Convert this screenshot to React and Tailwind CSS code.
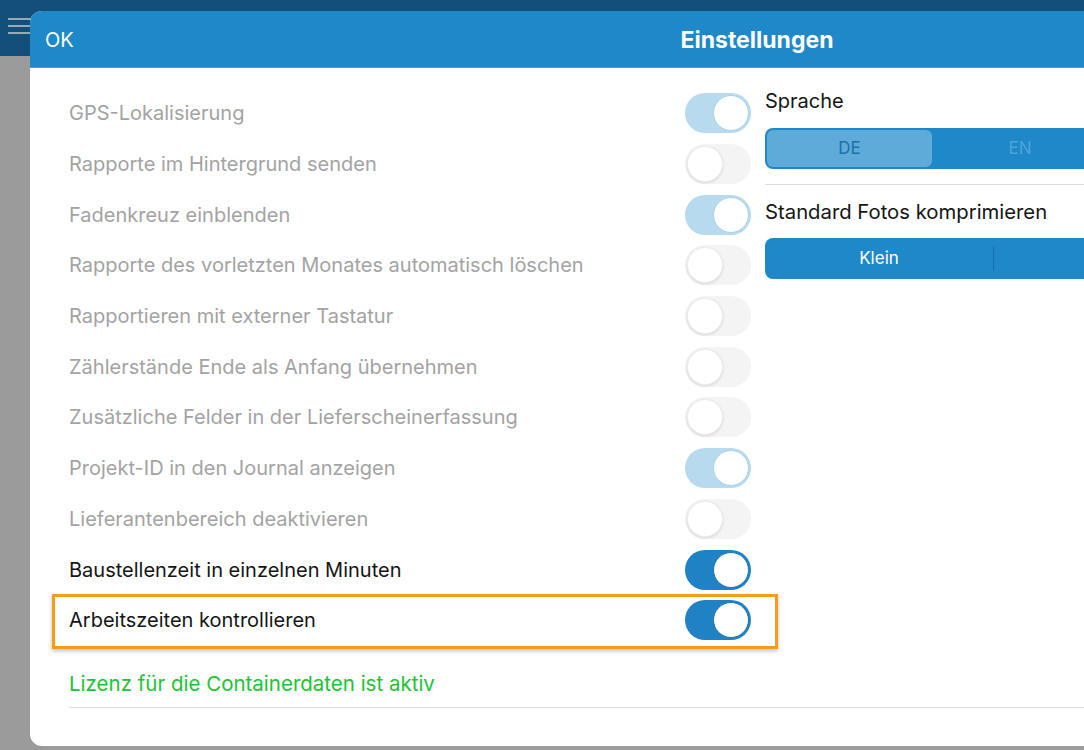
import React from "react";

const rows = [
  { label: "GPS-Lokalisierung", on: true, active: false },
  { label: "Rapporte im Hintergrund senden", on: false, active: false },
  { label: "Fadenkreuz einblenden", on: true, active: false },
  { label: "Rapporte des vorletzten Monates automatisch löschen", on: false, active: false },
  { label: "Rapportieren mit externer Tastatur", on: false, active: false },
  { label: "Zählerstände Ende als Anfang übernehmen", on: false, active: false },
  { label: "Zusätzliche Felder in der Lieferscheinerfassung", on: false, active: false },
  { label: "Projekt-ID in den Journal anzeigen", on: true, active: false },
  { label: "Lieferantenbereich deaktivieren", on: false, active: false },
  { label: "Baustellenzeit in einzelnen Minuten", on: true, active: true },
  { label: "Arbeitszeiten kontrollieren", on: true, active: true, highlight: true },
];

function Toggle({ on, active }) {
  if (on && active) {
    return (
      <div className="w-[66px] h-[40px] rounded-full bg-[#1e82c4] flex items-center justify-end pr-[2px]">
        <div className="w-[36px] h-[36px] rounded-full bg-white border border-[#1a74ad]" />
      </div>
    );
  }
  if (on) {
    return (
      <div className="w-[66px] h-[40px] rounded-full bg-[#b8daee] flex items-center justify-end pr-[2px]">
        <div className="w-[36px] h-[36px] rounded-full bg-white border border-[#a9d1ea]" />
      </div>
    );
  }
  return (
    <div className="w-[66px] h-[40px] rounded-full bg-[#f4f4f4] flex items-center justify-start pl-[2px]">
      <div className="w-[36px] h-[36px] rounded-full bg-white shadow-[0_1px_3px_rgba(0,0,0,0.12)] border border-[#ececec]" />
    </div>
  );
}

export default function App() {
  return (
    <div
      className="relative w-[1084px] h-[750px] overflow-hidden bg-[#9b9b9b]"
      style={{ fontFamily: 'Inter, "Liberation Sans", Arial, sans-serif' }}
    >
      <div className="h-[56px] bg-[#134f78] flex items-start pt-[18px] pl-[8px]">
        <div className="flex flex-col gap-[5px]">
          <div className="w-[24px] h-[2px] bg-[#9aa9b6]" />
          <div className="w-[24px] h-[2px] bg-[#9aa9b6]" />
          <div className="w-[24px] h-[2px] bg-[#9aa9b6]" />
        </div>
      </div>

      <div className="absolute left-[30px] top-[11px] w-[1454px] h-[735px] bg-white rounded-[12px] overflow-hidden flex flex-col">
        <div className="relative h-[57px] bg-[#1e88c9] border-b border-[#4a9fd6] flex items-center justify-center shrink-0">
          <span className="absolute left-[15px] top-[17px] text-white text-[20px] leading-[24px]">OK</span>
          <span className="text-white text-[23px] font-bold leading-[26px] pt-[2px]">Einstellungen</span>
        </div>

        <div className="flex-1 flex pt-[20px]">
          <div className="w-[721px] pl-[39px] flex flex-col">
            {rows.map((r, i) => (
              <div key={i} className="relative h-[50.7px] flex items-center justify-between">
                {r.highlight && (
                  <div className="absolute left-[-17px] right-[-27px] top-[-1px] bottom-[-3px] border-[3px] border-[#f59c1a] shadow-[0_2px_4px_rgba(0,0,0,0.25)] pointer-events-none" />
                )}
                <span
                  className={
                    "text-[20px] leading-[24px] " +
                    (r.active ? "text-[#151515]" : "text-[#a3a3a3]")
                  }
                >
                  {r.label}
                </span>
                <Toggle on={r.on} active={r.active} />
              </div>
            ))}
            <div className="h-[61px] flex items-end pb-[11px]">
              <span className="text-[20.5px] leading-[24px] text-[#21c236]">
                Lizenz für die Containerdaten ist aktiv
              </span>
            </div>
            <div className="h-px bg-[#dcdcdc] w-[1400px]" />
          </div>

          <div className="w-[680px] pl-[14px] flex flex-col -mt-[20px]">
            <div className="h-[26px] mt-[20px] flex items-center">
              <span className="text-[20px] leading-[24px] text-[#151515]">Sprache</span>
            </div>
            <div className="mt-[14px] h-[41px] rounded-[8px] bg-[#1e88c9] p-[2px] flex">
              <div className="w-[165px] rounded-[6px] bg-[#5eaad8] flex items-center justify-center text-[17px] text-[#1d70a8]">DE</div>
              <div className="w-[176px] flex items-center justify-center text-[17px] text-[#4fa3da]">EN</div>
              <div className="flex-1 flex items-center justify-center text-[17px] text-[#4fa3da]">FR</div>
              <div className="flex-1 flex items-center justify-center text-[17px] text-[#4fa3da]">IT</div>
            </div>
            <div className="mt-[15px] h-px bg-[#dcdcdc]" />
            <div className="mt-[14px] h-[26px] flex items-center">
              <span className="text-[20.3px] leading-[24px] text-[#151515]">Standard Fotos komprimieren</span>
            </div>
            <div className="mt-[13px] h-[41px] rounded-[8px] bg-[#1e88c9] flex items-center">
              <div className="w-[228px] flex items-center justify-center text-[17px] text-white">Klein</div>
              <div className="w-px h-[24px] bg-[#176ea6]" />
              <div className="w-[228px] flex items-center justify-center text-[17px] text-white">Mittel</div>
              <div className="w-px h-[24px] bg-[#176ea6]" />
              <div className="flex-1 flex items-center justify-center text-[17px] text-white">Groß</div>
            </div>
          </div>
        </div>
      </div>
    </div>
  );
}
